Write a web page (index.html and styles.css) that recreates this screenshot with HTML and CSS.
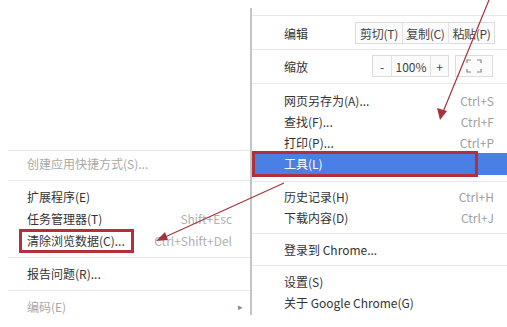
FILE: index.html
```html
<!DOCTYPE html>
<html lang="zh-CN">
<head>
    <meta charset="UTF-8">
    <title>工具菜单</title>
    <link rel="stylesheet" href="styles.css">
</head>
<body>
<div class="screen">
    <div class="submenu">
        <div class="sep first"></div>
        <div class="item off">创建应用快捷方式(S)...</div>
        <div class="sep"></div>
        <div class="item">扩展程序(E)</div>
        <div class="item">任务管理器(T)<span class="key">Shift+Esc</span></div>
        <div class="item"><span class="mark">清除浏览数据(C)...</span><span class="key">Ctrl+Shift+Del</span></div>
        <div class="sep"></div>
        <div class="item">报告问题(R)...</div>
        <div class="sep"></div>
        <div class="item off">编码(E)<span class="more">&#9656;</span></div>
    </div>

    <div class="menu">
        <div class="sep top"></div>
        <div class="row">
            <span class="label">编辑</span>
            <div class="group">
                <span class="btn edit">剪切(T)</span>
                <span class="btn edit">复制(C)</span>
                <span class="btn edit">粘贴(P)</span>
            </div>
        </div>
        <div class="sep"></div>
        <div class="row">
            <span class="label">缩放</span>
            <div class="group zoom">
                <span class="btn small">-</span>
                <span class="btn pct">100%</span>
                <span class="btn small">+</span>
            </div>
            <div class="group full">
                <span class="btn">
                    <svg width="16" height="14" viewBox="0 0 16 14" fill="none" stroke="#888" stroke-width="1.2">
                        <path d="M1 4V1h4M11 1h4v3M15 10v3h-4M5 13H1v-3"/>
                    </svg>
                </span>
            </div>
        </div>
        <div class="sep after-zoom"></div>
        <div class="item">网页另存为(A)...<span class="key">Ctrl+S</span></div>
        <div class="item">查找(F)...<span class="key">Ctrl+F</span></div>
        <div class="item">打印(P)...<span class="key">Ctrl+P</span></div>
        <div class="item active">工具(L)<span class="box"></span></div>
        <div class="sep wide"></div>
        <div class="item">历史记录(H)<span class="key">Ctrl+H</span></div>
        <div class="item">下载内容(D)<span class="key">Ctrl+J</span></div>
        <div class="sep"></div>
        <div class="item">登录到 Chrome...</div>
        <div class="sep"></div>
        <div class="item">设置(S)</div>
        <div class="item">关于 Google Chrome(G)</div>
    </div>

    <svg class="arrows" width="507" height="327" viewBox="0 0 507 327">
        <g stroke="#a8323c" stroke-width="1.2" fill="#a8323c">
            <line x1="489" y1="0" x2="443" y2="112"/>
            <polygon points="440,120 437,108 447,111" stroke="none"/>
            <line x1="284" y1="183" x2="165" y2="237"/>
            <polygon points="156,241 165,232 168,240" stroke="none"/>
        </g>
    </svg>
</div>
</body>
</html>
```

FILE: styles.css
```css
body {
    margin: 0;
    background: #fff;
    font-family: "Noto Sans CJK SC", "Noto Sans", sans-serif;
    font-size: 12px;
    color: #333;
}
.screen {
    position: relative;
    width: 507px;
    height: 327px;
    overflow: hidden;
    display: flex;
}
.submenu {
    width: 250px;
    padding-top: 150px;
    padding-left: 8px;
    box-sizing: border-box;
}
.menu {
    width: 257px;
    margin-top: 8px;
    height: 307px;
    border-left: 2px solid #c4c4c4;
    box-sizing: border-box;
    padding-top: 7px;
}
.sep {
    height: 1px;
    background: #e8e8e8;
    margin: 5px 0;
}
.sep.first { margin-top: 0; margin-bottom: 2px; }
.sep.top { margin: 0 0 6px; }
.sep.after-zoom { margin: 6px 0 6px; }
.sep.wide { margin: 6px 0 4px; }
.item {
    position: relative;
    height: 21px;
    line-height: 21px;
    padding-left: 31px;
    display: flex;
    white-space: nowrap;
}
.submenu .item { padding-left: 19px; height: 22px; line-height: 22px; }
.menu .item { padding-left: 32px; }
.item.off { color: #a8a8a8; }
.key {
    margin-left: auto;
    padding-right: 13px;
    color: #a0a0a0;
}
.submenu .key { padding-right: 18px; color: #b0b0b0; }
.more {
    margin-left: auto;
    padding-right: 7px;
    font-size: 9px;
    color: #888;
}
.mark {
    border: 3px solid #b3303b;
    margin-left: -8px;
    padding: 0 6px 0 5px;
    line-height: 18px;
    height: 18px;
    align-self: center;
}
.item.active {
    background: #4a80e6;
    color: #fff;
    height: 22px;
    line-height: 22px;
}
.box {
    position: absolute;
    left: 0;
    top: -2px;
    width: 226px;
    height: 26px;
    border: 3px solid #b3303b;
    box-sizing: border-box;
}
.row {
    display: flex;
    align-items: center;
    height: 22px;
    padding-left: 32px;
    white-space: nowrap;
}
.label { width: 71px; flex: none; }
.group {
    display: flex;
    border: 1px solid #dcdcdc;
    height: 20px;
    background: #fbfbfb;
    flex: none;
}
.btn {
    display: flex;
    align-items: center;
    justify-content: center;
    border-left: 1px solid #e2e2e2;
    color: #444;
    box-sizing: border-box;
    white-space: nowrap;
}
.btn:first-child { border-left: 0; }
.btn.edit { width: 46px; letter-spacing: -0.3px; }
.zoom { margin-left: 17px; }
.btn.small { width: 18px; }
.btn.pct { width: 39px; }
.full { margin-left: 6px; }
.full .btn { width: 36px; }
.arrows {
    position: absolute;
    left: 0;
    top: 0;
}
```
